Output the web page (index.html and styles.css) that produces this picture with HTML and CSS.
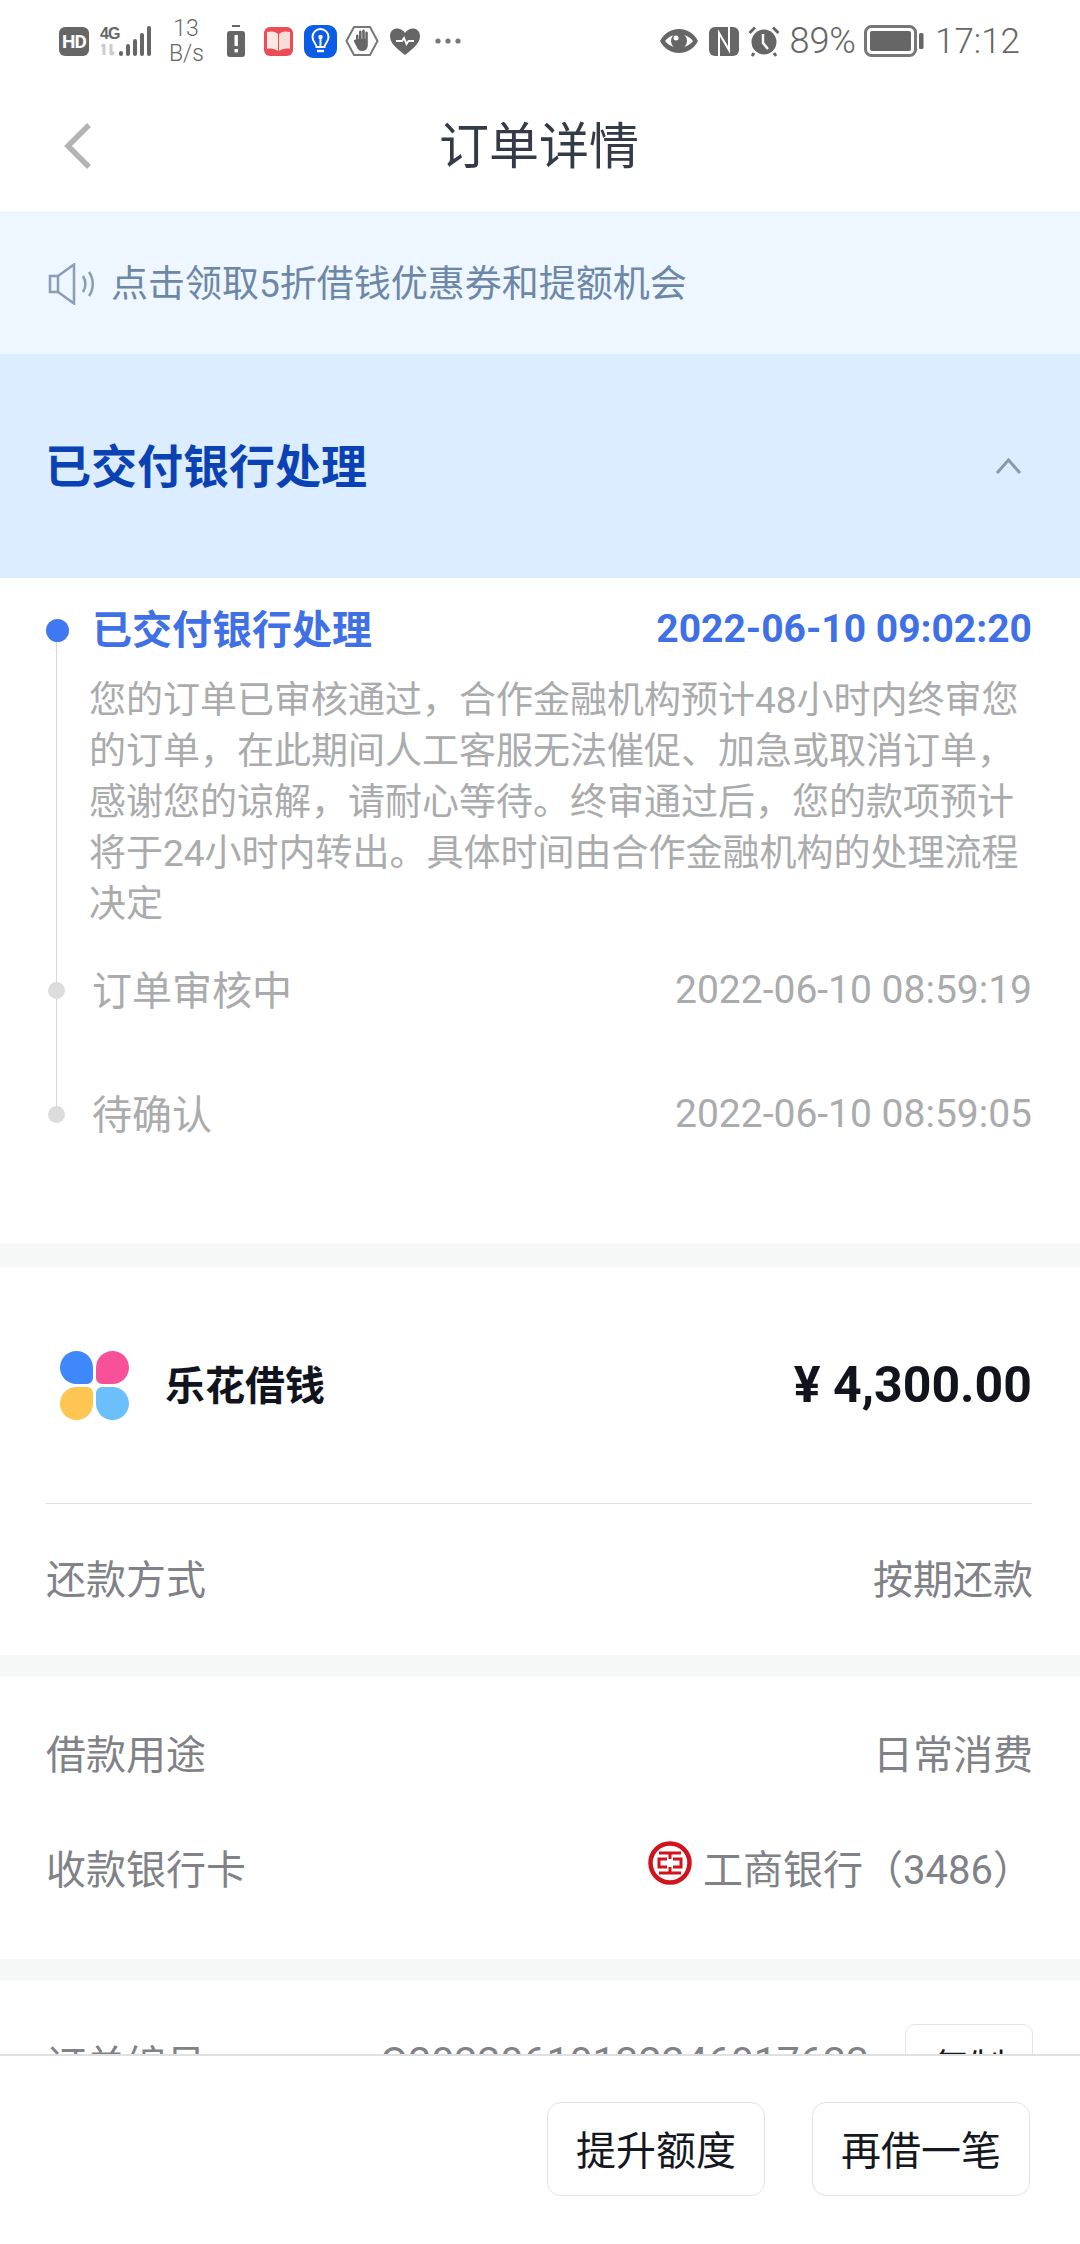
FILE: index.html
```html
<!DOCTYPE html>
<html lang="zh-CN">

<head>
  <meta charset="UTF-8">
  <meta name="viewport" content="width=device-width, initial-scale=1.0">
  <title>订单详情</title>
  <link rel="stylesheet" href="styles.css">
</head>

<body>
  <!-- 状态栏 -->
  <div class="status-bar">
    <div class="status-left">
      <span class="hd-badge">HD</span>
      <svg class="ic-signal" width="51" height="31" viewBox="0 0 51 31">
        <text x="0" y="13" class="signal-label">4G</text>
        <path d="M4 18v11M2 21l2-3M11 18v11M11 29l3-3" stroke="#ccc" stroke-width="3" fill="none" />
        <g fill="#666">
          <rect x="19" y="25" width="4" height="5" rx="2" />
          <rect x="26" y="18" width="4" height="12" rx="2" />
          <rect x="33" y="13" width="4" height="17" rx="2" />
          <rect x="40" y="7" width="4" height="23" rx="2" />
          <rect x="47" y="0" width="4" height="30" rx="2" />
        </g>
      </svg>
      <div class="net-speed">13<br>B/s</div>
      <svg class="ic-alert" width="18" height="32" viewBox="0 0 18 32">
        <rect x="5" y="0" width="8" height="2" fill="#666" />
        <rect x="0" y="6" width="18" height="26" rx="3" fill="#666" />
        <rect x="7.5" y="10" width="3.4" height="11" fill="#fff" />
        <rect x="7.5" y="24" width="3.4" height="3.4" fill="#fff" />
      </svg>
      <svg class="ic-book" width="29" height="29" viewBox="0 0 29 29">
        <rect width="29" height="29" rx="6" fill="#ec4c55" />
        <path d="M3 5c4-1 8-1 11 2v17c-3-2-7-3-11-2z" fill="#fbe6e4" />
        <path d="M26 5c-4-1-8-1-11 2v17c3-2 7-3 11-2z" fill="#f7dcd8" />
      </svg>
      <svg class="ic-bulb" width="33" height="33" viewBox="0 0 33 33">
        <rect width="33" height="33" rx="9" fill="#0b5ce6" />
        <path d="M12.5 22c0-3-4-5-4-10a8 8 0 0 1 16 0c0 5-4 7-4 10z" fill="none" stroke="#fff" stroke-width="2" />
        <path d="M13 26h7" stroke="#fff" stroke-width="2.4" />
        <path d="M16.5 21v-8" stroke="#fff" stroke-width="2" />
        <circle cx="16.5" cy="12" r="2.2" fill="#fff" />
      </svg>
      <svg class="ic-hand" width="34" height="32" viewBox="0 0 34 32">
        <path d="M9 2h16l7.500 14L25 30H9L1.500 16z" fill="#fff" stroke="#777" stroke-width="2" />
        <path d="M11 11c0-2 2.500-2 2.500 0v3h.5V7c0-2 2.600-2 2.600 0v7h.6V6c0-2 2.600-2 2.600 0v8h.5V8c0-2 2.500-2 2.500 0v12c0 3-2 6-5.500 6-3 0-4.500-1.500-5.500-4l-2.800-5.500c-.8-1.800 1.500-3 2.500-1.300L11 17z" fill="#666" />
      </svg>
      <svg class="ic-heart" width="30" height="27" viewBox="0 0 30 27">
        <path d="M15 27C6 20 0 15 0 8c0-9 11-10 15-3 4-7 15-6 15 3 0 7-6 12-15 19z" fill="#666" />
        <path d="M6 13h6l2-3 2.500 6 2-3h5.500" fill="none" stroke="#fff" stroke-width="1.800" />
      </svg>
      <svg class="ic-dots" width="26" height="6" viewBox="0 0 26 6">
        <circle cx="3" cy="3" r="2.600" fill="#777" />
        <circle cx="13" cy="3" r="2.600" fill="#777" />
        <circle cx="23" cy="3" r="2.600" fill="#777" />
      </svg>
    </div>
    <div class="status-right">
      <svg class="ic-eye" width="38" height="24" viewBox="0 0 38 24">
        <path d="M0 12C8-4 30-4 38 12 30 28 8 28 0 12z" fill="#666" />
        <path d="M5 12C12 3 26 3 33 12 26 21 12 21 5 12z" fill="#fff" />
        <circle cx="19" cy="12" r="8" fill="#666" />
        <circle cx="16" cy="9" r="2.500" fill="#fff" />
      </svg>
      <svg class="ic-nfc" width="30" height="29" viewBox="0 0 30 29">
        <rect width="30" height="29" rx="6" fill="#666" />
        <path d="M10 29V6l10 17V0" fill="none" stroke="#fff" stroke-width="2" />
      </svg>
      <svg class="ic-alarm" width="32" height="32" viewBox="0 0 32 32">
        <circle cx="16" cy="17" r="12.500" fill="#666" />
        <path d="M1.500 8L7 2.500M30.500 8L25 2.500" stroke="#666" stroke-width="3" />
        <path d="M6 28l-2 3M26 28l2 3" stroke="#666" stroke-width="3" />
        <path d="M15 9v9l5 6" fill="none" stroke="#fff" stroke-width="2.400" />
      </svg>
      <span class="battery-text">89%</span>
      <svg class="ic-battery" width="60" height="32" viewBox="0 0 60 32">
        <rect x="1.500" y="1.500" width="50" height="29" rx="6" fill="none" stroke="#777" stroke-width="3" />
        <rect x="6" y="6" width="41" height="20" rx="2" fill="#666" />
        <rect x="55" y="8" width="4.500" height="16" rx="1.500" fill="#666" />
      </svg>
      <span class="clock">17:12</span>
    </div>
  </div>

  <!-- 顶部导航 -->
  <header class="nav-bar">
    <svg class="back-icon" width="32" height="48" viewBox="0 0 32 48">
      <path d="M27 3L6 24l21 21" fill="none" stroke="#b4b4b4" stroke-width="5.500" />
    </svg>
    <h1>订单详情</h1>
  </header>

  <main class="content">
    <!-- 通知条 -->
    <div class="notice">
      <svg width="50" height="42" viewBox="0 0 50 42">
        <path d="M2 13h8L26 1.500v39L10 29H2z" fill="none" stroke="#8b9db5" stroke-width="2.500" />
        <path d="M10 13v16" stroke="#8b9db5" stroke-width="2.500" />
        <path d="M35 13c3 5 3 11 0 16M41 9c5 7 5 17 0 24" fill="none" stroke="#8b9db5" stroke-width="2.500" />
      </svg>
      <span>点击领取5折借钱优惠券和提额机会</span>
    </div>

    <!-- 当前状态 -->
    <div class="status-hero">
      <h2>已交付银行处理</h2>
      <svg width="27" height="16" viewBox="0 0 27 16">
        <path d="M2 15L13.500 2 25 15" fill="none" stroke="#8a9aac" stroke-width="3" />
      </svg>
    </div>

    <!-- 时间线 -->
    <section class="timeline card">
      <div class="tl-item active">
        <div class="tl-head">
          <span class="tl-title">已交付银行处理</span>
          <span class="tl-time">2022-06-10 09:02:20</span>
        </div>
        <p class="tl-desc">您的订单已审核通过，合作金融机构预计48小时内终审您的订单，在此期间人工客服无法催促、加急或取消订单，感谢您的谅解，请耐心等待。终审通过后，您的款项预计将于24小时内转出。具体时间由合作金融机构的处理流程决定</p>
      </div>
      <div class="tl-item">
        <div class="tl-head">
          <span class="tl-title">订单审核中</span>
          <span class="tl-time">2022-06-10 08:59:19</span>
        </div>
      </div>
      <div class="tl-item last">
        <div class="tl-head">
          <span class="tl-title">待确认</span>
          <span class="tl-time">2022-06-10 08:59:05</span>
        </div>
      </div>
    </section>

    <!-- 借款金额 -->
    <section class="card">
      <div class="loan-summary">
        <div class="brand-logo">
          <i class="petal blue"></i>
          <i class="petal pink"></i>
          <i class="petal yellow"></i>
          <i class="petal sky"></i>
        </div>
        <span class="brand-name">乐花借钱</span>
        <span class="amount">¥ 4,300.00</span>
      </div>
      <div class="row row-repay">
        <span>还款方式</span>
        <span>按期还款</span>
      </div>
    </section>

    <!-- 借款信息 -->
    <section class="card card-info">
      <div class="row">
        <span>借款用途</span>
        <span>日常消费</span>
      </div>
      <div class="row">
        <span>收款银行卡</span>
        <span class="bank">
          <svg class="bank-logo" width="44" height="44" viewBox="0 0 44 44">
            <circle cx="22" cy="22" r="19.500" fill="none" stroke="#d2121d" stroke-width="4.500" />
            <path d="M11 12h22M11 32h22M22 12v6M22 26v6M19 18h-8v8h8M25 18h8v8h-8" fill="none" stroke="#d2121d" stroke-width="3" />
          </svg>
          <span>工商银行（3486）</span>
        </span>
      </div>
    </section>

    <!-- 订单编号，被底部栏盖住一半 -->
    <section class="card card-order">
      <div class="row">
        <span>订单编号</span>
        <span class="order-no">O20220610132246017623<button class="copy-btn">复制</button></span>
      </div>
    </section>
  </main>

  <!-- 底部操作栏 -->
  <footer class="action-bar">
    <button>提升额度</button>
    <button>再借一笔</button>
  </footer>
</body>

</html>
```

FILE: styles.css
```css
/* 全局样式 */
html,
body {
  margin: 0;
  padding: 0;
}

body {
  width: 1080px;
  height: 2244px;
  display: flex;
  flex-direction: column;
  overflow: hidden;
  background-color: #fff;
  font-family: Roboto, "Noto Sans CJK SC", sans-serif;
  color: #808288;
}

/* 状态栏 */
.status-bar {
  height: 82px;
  flex-shrink: 0;
  padding: 0 60px 0 59px;
  display: flex;
  justify-content: space-between;
  align-items: center;
  color: #666;
}

.status-left,
.status-right {
  display: flex;
  align-items: center;
}

.hd-badge {
  width: 30px;
  height: 29px;
  border-radius: 6px;
  background-color: #666;
  color: #fff;
  font-size: 19px;
  font-weight: 700;
  line-height: 29px;
  letter-spacing: -1px;
  text-align: center;
}

.signal-label {
  font-family: "Liberation Sans", sans-serif;
  font-size: 16px;
  font-weight: 700;
  fill: #666;
  letter-spacing: -1px;
}

.ic-signal {
  margin-left: 11px;
}

.net-speed {
  margin-left: 18px;
  width: 34px;
  font-size: 23px;
  font-weight: 300;
  line-height: 25px;
  text-align: center;
}

.ic-alert {
  margin-left: 24px;
}

.ic-book {
  margin-left: 19px;
}

.ic-bulb {
  margin-left: 11px;
}

.ic-hand {
  margin-left: 8px;
}

.ic-heart {
  margin-left: 11px;
}

.ic-dots {
  margin-left: 15px;
}

.ic-nfc {
  margin-left: 11px;
}

.ic-alarm {
  margin-left: 9px;
}

.battery-text {
  margin-left: 9px;
  font-size: 36px;
  font-weight: 300;
}

.ic-battery {
  margin-left: 8px;
}

.clock {
  margin-left: 11px;
  font-size: 35px;
  font-weight: 300;
}

/* 顶部导航 */
.nav-bar {
  height: 126px;
  flex-shrink: 0;
  padding-bottom: 4px;
  position: relative;
  display: flex;
  justify-content: center;
  align-items: center;
  border-bottom: 1px solid #eceef2;
}

.nav-bar h1 {
  margin: 0;
  padding: 0 2px 6px 0;
  font-size: 50px;
  font-weight: 400;
  color: #333a48;
}

.back-icon {
  position: absolute;
  left: 62px;
  top: 40px;
}

/* 主体内容，超出部分被底部栏挡住 */
.content {
  flex: 1;
  min-height: 0;
  overflow: hidden;
  background-color: #f6f8f8;
}

.notice {
  height: 141px;
  padding-left: 48px;
  display: flex;
  align-items: center;
  gap: 13px;
  background-color: #eef6ff;
  font-size: 37px;
  color: #6d87a6;
}

.notice span {
  padding-bottom: 6px;
}

.status-hero {
  height: 224px;
  padding: 0 58px 0 45px;
  display: flex;
  justify-content: space-between;
  align-items: center;
  background-color: #dbedff;
}

.status-hero h2 {
  margin: 0;
  padding-bottom: 6px;
  font-size: 46px;
  font-weight: 700;
  color: #0b42b3;
}

.card {
  background-color: #fff;
  margin-bottom: 22px;
}

/* 时间线 */
.timeline {
  height: 665px;
  box-sizing: border-box;
  padding: 27px 48px 0 46px;
  margin-bottom: 24px;
}

.tl-item {
  position: relative;
  padding-left: 46px;
  padding-bottom: 76px;
}

.tl-item::before {
  content: "";
  position: absolute;
  left: 2px;
  top: 16px;
  width: 17px;
  height: 17px;
  border-radius: 50%;
  background-color: #dcdcdc;
  z-index: 1;
}

/* 竖线 */
.tl-item::after {
  content: "";
  position: absolute;
  left: 10px;
  top: 24px;
  bottom: -24px;
  width: 1px;
  background-color: #d8d8d8;
}

.tl-item.active {
  padding-bottom: 36px;
}

.tl-item.active::before {
  left: 0;
  top: 14px;
  width: 23px;
  height: 23px;
  background-color: #3f78f0;
}

.tl-item.last {
  padding-bottom: 0;
}

.tl-item.last::after {
  display: none;
}

.tl-head {
  height: 48px;
  display: flex;
  justify-content: space-between;
  align-items: center;
  font-size: 40px;
  color: #a9abad;
}

.tl-title {
  padding-bottom: 4px;
}

.tl-time {
  font-size: 39px;
}

.active .tl-title {
  font-weight: 700;
  color: #3f70e6;
}

.active .tl-time {
  font-weight: 700;
  color: #3f70e6;
}

.tl-desc {
  margin: 22px 0 0 -3px;
  font-size: 37px;
  line-height: 51px;
  color: #a9abad;
}

/* 借款金额 */
.loan-summary {
  height: 236px;
  margin: 0 48px 0 46px;
  display: flex;
  align-items: center;
  border-bottom: 1px solid #dfdfdf;
}

.brand-logo {
  margin-left: 14px;
  width: 69px;
  display: grid;
  grid-template-columns: 33px 33px;
  grid-auto-rows: 33px;
  gap: 3px;
}

.petal.blue {
  background-color: #3f88fb;
  border-radius: 50% 50% 6px 50%;
}

.petal.pink {
  background-color: #f9509a;
  border-radius: 50% 50% 50% 6px;
}

.petal.yellow {
  background-color: #fdc653;
  border-radius: 50% 6px 50% 50%;
}

.petal.sky {
  background-color: #6bbffb;
  border-radius: 6px 50% 50% 50%;
}

.brand-name {
  margin-left: 36px;
  padding-bottom: 4px;
  font-size: 40px;
  font-weight: 700;
  color: #11141d;
}

.amount {
  margin-left: auto;
  font-size: 50px;
  font-weight: 700;
  color: #11141d;
}

/* 信息行 */
.row {
  height: 114px;
  box-sizing: border-box;
  padding-bottom: 5px;
  margin: 0 47px 0 46px;
  display: flex;
  justify-content: space-between;
  align-items: center;
  font-size: 40px;
  color: #808288;
}

.row-repay {
  height: 151px;
}

.card-info {
  padding: 20px 0 32px;
}

.card-info .row {
  height: 115px;
}

.bank {
  display: flex;
  align-items: center;
  gap: 11px;
}

.bank-logo {
  margin-top: -8px;
}

.card-order {
  padding-top: 26px;
}

.order-no {
  display: flex;
  align-items: center;
  gap: 36px;
  font-size: 41px;
}

.copy-btn {
  width: 128px;
  height: 80px;
  margin-top: 5px;
  padding: 0;
  background-color: #fff;
  border: 1px solid #e4e4e4;
  border-radius: 10px;
  font-family: inherit;
  font-size: 36px;
  color: #15181f;
}

/* 底部操作栏 */
.action-bar {
  height: 190px;
  flex-shrink: 0;
  box-sizing: border-box;
  padding: 46px 50px 0 0;
  display: flex;
  justify-content: flex-end;
  gap: 47px;
  background-color: #fff;
  border-top: 2px solid #dfe0e2;
}

.action-bar button {
  width: 218px;
  height: 94px;
  padding: 0 0 3px;
  background-color: #fff;
  border: 1px solid #e2e3e6;
  border-radius: 14px;
  font-family: inherit;
  font-size: 40px;
  color: #15181f;
}
```
